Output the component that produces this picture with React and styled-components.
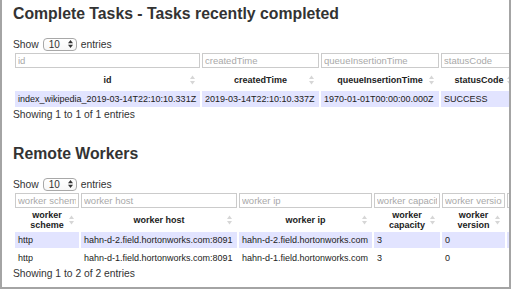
import React from "react";
import styled, { createGlobalStyle } from "styled-components";

const GlobalStyle = createGlobalStyle`
  html, body {
    margin: 0;
    padding: 0;
    background: #fff;
  }
  body {
    font-family: "Liberation Sans", Arial, Helvetica, sans-serif;
    color: #333;
  }
`;

const taskColumns = [
  { key: "id", label: "id", width: 185 },
  { key: "createdTime", label: "createdTime", width: 117 },
  { key: "queueInsertionTime", label: "queueInsertionTime", width: 118 },
  { key: "statusCode", label: "statusCode", width: 76 },
];

const taskRows = [
  [
    "index_wikipedia_2019-03-14T22:10:10.331Z",
    "2019-03-14T22:10:10.337Z",
    "1970-01-01T00:00:00.000Z",
    "SUCCESS",
  ],
];

const workerColumns = [
  { key: "scheme", label: "worker scheme", width: 64 },
  { key: "host", label: "worker host", width: 156 },
  { key: "ip", label: "worker ip", width: 133 },
  { key: "capacity", label: "worker capacity", width: 66 },
  { key: "version", label: "worker version", width: 63 },
  { key: "currCapacityUsed", label: "currCapacityUsed", width: 60 },
];

const workerRows = [
  [
    "http",
    "hahn-d-2.field.hortonworks.com:8091",
    "hahn-d-2.field.hortonworks.com",
    "3",
    "0",
    "0",
  ],
  [
    "http",
    "hahn-d-1.field.hortonworks.com:8091",
    "hahn-d-1.field.hortonworks.com",
    "3",
    "0",
    "0",
  ],
];

const SortIcon = () => (
  <SortGlyph width="5" height="10" viewBox="0 0 5 10">
    <polygon points="0,4 2.5,0.5 5,4" />
    <polygon points="0,6 5,6 2.5,9.5" />
  </SortGlyph>
);

const SelectArrows = () => (
  <svg width="5" height="8" viewBox="0 0 5 8">
    <polygon points="0,3.2 2.5,0 5,3.2" fill="#333" />
    <polygon points="0,4.8 5,4.8 2.5,8" fill="#333" />
  </svg>
);

const DataTable = ({ title, columns, rows, headHeight }) => {
  const spacing = 2;
  const tableWidth =
    columns.reduce((sum, c) => sum + c.width, 0) +
    spacing * (columns.length + 1);

  return (
    <Section>
      <Title>{title}</Title>
      <LengthRow>
        <span>Show</span>
        <FakeSelect>
          <span>10</span>
          <SelectArrows />
        </FakeSelect>
        <span>entries</span>
      </LengthRow>
      <Table style={{ width: tableWidth }}>
        <colgroup>
          {columns.map((c) => (
            <col key={c.key} style={{ width: c.width }} />
          ))}
        </colgroup>
        <thead>
          <FilterRow>
            {columns.map((c) => (
              <FilterCell key={c.key}>
                <FilterInput type="text" placeholder={c.label} />
              </FilterCell>
            ))}
          </FilterRow>
          <HeadRow $height={headHeight}>
            {columns.map((c) => (
              <HeadCell key={c.key}>
                {c.label}
                <SortIcon />
              </HeadCell>
            ))}
          </HeadRow>
        </thead>
        <tbody>
          {rows.map((row, i) => (
            <BodyRow key={i} $odd={i % 2 === 0}>
              {row.map((cell, j) => (
                <BodyCell key={j}>{cell}</BodyCell>
              ))}
            </BodyRow>
          ))}
        </tbody>
      </Table>
      <Info>
        Showing 1 to {rows.length} of {rows.length} entries
      </Info>
    </Section>
  );
};

const App = () => {
  return (
    <>
      <GlobalStyle />
      <Frame>
        <DataTable
          title="Complete Tasks - Tasks recently completed"
          columns={taskColumns}
          rows={taskRows}
          headHeight={19}
        />
        <DataTable
          title="Remote Workers"
          columns={workerColumns}
          rows={workerRows}
          headHeight={19}
        />
      </Frame>
    </>
  );
};

const Frame = styled.div`
  width: 511px;
  height: 289px;
  box-sizing: border-box;
  border: 2px solid #a4a4a4;
  border-top: none;
  padding: 5px 0 0 11px;
  overflow: hidden;
  background: #fff;
`;

const Section = styled.section`
  display: flex;
  flex-direction: column;
  align-items: flex-start;

  & + & {
    margin-top: 25px;
  }
`;

const Title = styled.h2`
  margin: 0;
  font-size: 15.8px;
  line-height: 18px;
  font-weight: bold;
  color: #333;
  white-space: nowrap;
`;

const LengthRow = styled.div`
  display: flex;
  align-items: center;
  gap: 4px;
  height: 14px;
  margin-top: 14px;
  font-size: 10.3px;
  color: #333;
`;

const FakeSelect = styled.div`
  display: flex;
  align-items: center;
  justify-content: space-between;
  box-sizing: border-box;
  width: 34px;
  height: 13px;
  padding: 0 3px 0 5px;
  border: 1px solid #a8a8a8;
  border-radius: 4px;
  background: linear-gradient(#fff, #f7f7f7);
  font-size: 10px;
  line-height: 11px;
`;

const Table = styled.table`
  border-collapse: separate;
  border-spacing: 2px;
  table-layout: fixed;
  flex-shrink: 0;
`;

const FilterRow = styled.tr`
  height: 15px;
`;

const FilterCell = styled.td`
  padding: 0;
`;

const FilterInput = styled.input`
  display: block;
  box-sizing: border-box;
  width: 100%;
  height: 15px;
  margin: 0;
  padding: 0 2px;
  border: 1px solid #cbcbcb;
  border-radius: 0;
  font-family: "Liberation Sans", Arial, sans-serif;
  font-size: 9.5px;
  color: #333;
  outline: none;

  &::placeholder {
    color: #a9a9a9;
  }
`;

const HeadRow = styled.tr`
  height: ${(p) => p.$height}px;
`;

const HeadCell = styled.th`
  position: relative;
  padding: 0 12px;
  font-size: 9px;
  line-height: 10px;
  font-weight: bold;
  color: #222;
  text-align: center;
  vertical-align: middle;
`;

const SortGlyph = styled.svg`
  position: absolute;
  right: 5px;
  top: 50%;
  transform: translateY(-50%);
  fill: #d6d6d6;
`;

const BodyRow = styled.tr`
  height: 16px;
  background: ${(p) => (p.$odd ? "#e2e4ff" : "#fff")};
`;

const BodyCell = styled.td`
  padding: 0 3px;
  font-size: 9px;
  color: #222;
  white-space: nowrap;
  overflow: hidden;
  vertical-align: middle;
`;

const Info = styled.div`
  font-size: 10.3px;
  line-height: 11px;
  color: #333;
  white-space: nowrap;
`;

export default App;
